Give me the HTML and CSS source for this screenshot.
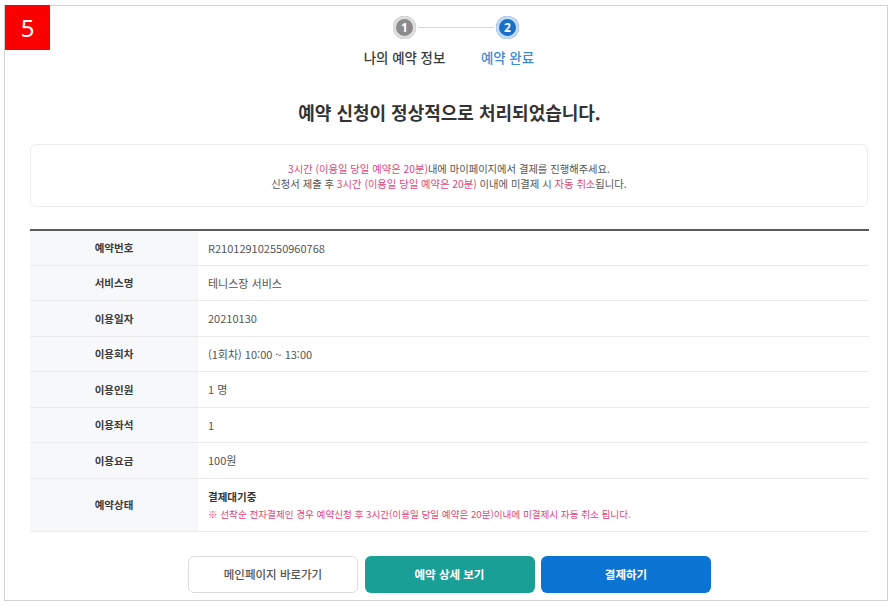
FILE: index.html
```html
<!DOCTYPE html>
<html lang="ko">
<head>
<meta charset="utf-8">
<title>예약 완료</title>
<link rel="stylesheet" href="styles.css">
</head>
<body>
<div class="frame">
  <div class="badge">5</div>
  <div class="content">
    <div class="stepper">
      <div class="step-icons">
        <span class="circle circle-done">1</span>
        <span class="step-line"></span>
        <span class="circle circle-active">2</span>
      </div>
      <div class="step-labels">
        <span class="step-label">나의 예약 정보</span>
        <span class="step-label step-label-active">예약 완료</span>
      </div>
    </div>

    <h1 class="title">예약 신청이 정상적으로 처리되었습니다.</h1>

    <div class="notice">
      <p><span class="pink">3시간 (이용일 당일 예약은 20분)</span>내에 마이페이지에서 결제를 진행해주세요.</p>
      <p>신청서 제출 후 <span class="pink">3시간 (이용일 당일 예약은 20분)</span> 이내에 미결제 시 <span class="pink">자동 취소</span>됩니다.</p>
    </div>

    <div class="info">
      <div class="row"><div class="label">예약번호</div><div class="value">R210129102550960768</div></div>
      <div class="row"><div class="label">서비스명</div><div class="value">테니스장 서비스</div></div>
      <div class="row"><div class="label">이용일자</div><div class="value">20210130</div></div>
      <div class="row"><div class="label">이용회차</div><div class="value">(1회차) 10:00 ~ 13:00</div></div>
      <div class="row"><div class="label">이용인원</div><div class="value">1 명</div></div>
      <div class="row"><div class="label">이용좌석</div><div class="value">1</div></div>
      <div class="row"><div class="label">이용요금</div><div class="value">100원</div></div>
      <div class="row row-tall"><div class="label">예약상태</div><div class="value">
        <div class="status">결제대기중</div>
        <div class="status-note">※ 선착순 전자결제인 경우 예약신청 후 3시간(이용일 당일 예약은 20분)이내에 미결제시 자동 취소 됩니다.</div>
      </div></div>
    </div>

    <div class="buttons">
      <button class="btn btn-white">메인페이지 바로가기</button>
      <button class="btn btn-teal">예약 상세 보기</button>
      <button class="btn btn-blue">결제하기</button>
    </div>
  </div>
</div>
</body>
</html>
```

FILE: styles.css
```css
* { box-sizing: border-box; }
html, body { margin: 0; padding: 0; background: #fff; }
body {
  font-family: "Noto Sans CJK KR", "Noto Sans", sans-serif;
  color: #333;
  width: 895px;
  height: 606px;
  overflow: hidden;
}
.frame {
  position: relative;
  margin: 5px 0 0 4px;
  width: 884px;
  height: 596px;
  border: 1px solid #d2d2d2;
}
.badge {
  position: absolute;
  left: 0;
  top: -1px;
  width: 45px;
  height: 45px;
  background: #fb0000;
  color: #fff;
  font-family: "Noto Sans", "DejaVu Sans", sans-serif;
  font-size: 24px;
  line-height: 45px;
  text-align: center;
}
.content {
  padding: 10px 0 0 25px;
  width: 864px;
}
.stepper {
  display: flex;
  flex-direction: column;
  align-items: center;
  padding-left: 13px;
}
.step-icons {
  display: flex;
  align-items: center;
}
.circle {
  width: 23px;
  height: 23px;
  border-radius: 50%;
  color: #fff;
  font-size: 12px;
  font-weight: 700;
  display: flex;
  align-items: center;
  justify-content: center;
  font-family: "Noto Sans", sans-serif;
}
.circle-done {
  background: #8b8b8b;
  box-shadow: 0 0 0 3px #dedede inset;
}
.circle-active {
  background: #1a6fc9;
  box-shadow: 0 0 0 3px #c3daf2 inset;
}
.step-line {
  width: 76px;
  height: 1px;
  background: #d6d6d6;
  margin: 0 2px;
}
.step-labels {
  display: flex;
  margin-top: 9px;
}
.step-label {
  width: 103px;
  text-align: center;
  font-size: 13.4px;
  font-weight: 500;
  line-height: 18px;
  color: #3a3a3a;
}
.step-label-active { color: #3b8bd6; }
.title {
  margin: 34px 0 0;
  text-align: center;
  font-size: 18px;
  font-weight: 700;
  line-height: 24px;
  color: #333;
}
.notice {
  margin-top: 20px;
  height: 63px;
  width: 838px;
  border: 1px solid #ececec;
  border-radius: 6px;
  display: flex;
  flex-direction: column;
  justify-content: center;
  align-items: center;
  font-size: 10.3px;
  line-height: 15px;
  color: #555;
}
.notice p { margin: 0; }
.pink { color: #e0467a; }
.info {
  margin-top: 22px;
  border-top: 2px solid #5a5a5a;
  width: 839px;
}
.row {
  display: flex;
  height: 35.5px;
  border-bottom: 1px solid #ebebeb;
}
.row:first-child { height: 34.5px; }
.row-tall { height: 53px; }
.label {
  width: 168px;
  background: #f7f8fa;
  display: flex;
  align-items: center;
  justify-content: center;
  font-size: 10.5px;
  font-weight: 700;
  color: #3a3a3a;
}
.value {
  flex: 1;
  padding-left: 10px;
  display: flex;
  flex-direction: column;
  justify-content: center;
  font-size: 11px;
  color: #555;
}
.status {
  font-size: 10.5px;
  font-weight: 700;
  color: #333;
  line-height: 16px;
}
.status-note {
  font-size: 9.6px;
  color: #e0467a;
  line-height: 14px;
  margin-top: 2px;
}
.buttons {
  display: flex;
  justify-content: center;
  gap: 6.5px;
  margin-top: 24px;
}
.btn {
  width: 170px;
  height: 37px;
  border-radius: 6px;
  font-family: "Noto Sans CJK KR", sans-serif;
  font-size: 11.5px;
  font-weight: 700;
  cursor: pointer;
  border: 1px solid transparent;
}
.btn-white {
  background: #fff;
  border-color: #dcdcdc;
  color: #555;
  font-weight: 500;
}
.btn-teal { background: #1a9f97; color: #fff; }
.btn-blue { background: #0b74d2; color: #fff; }
```
